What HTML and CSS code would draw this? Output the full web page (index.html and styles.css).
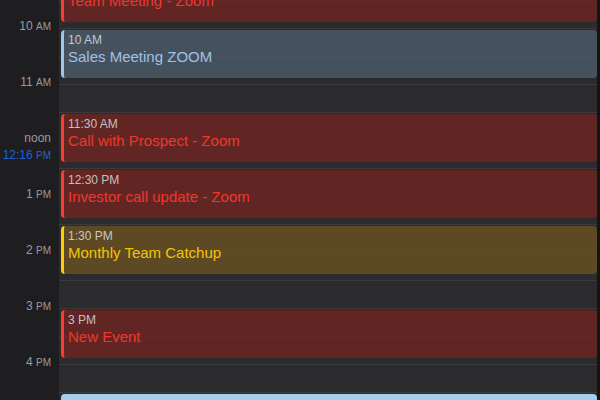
FILE: index.html
```html
<!DOCTYPE html>
<html>
<head>
<meta charset="utf-8">
<link rel="stylesheet" href="styles.css">
</head>
<body>
<div class="cal">
  <div class="times">
    <div class="hour">10 <span class="ap">AM</span></div>
    <div class="hour">11 <span class="ap">AM</span></div>
    <div class="hour">noon<div class="now">12:16 <span class="ap">PM</span></div></div>
    <div class="hour">1 <span class="ap">PM</span></div>
    <div class="hour">2 <span class="ap">PM</span></div>
    <div class="hour">3 <span class="ap">PM</span></div>
    <div class="hour">4 <span class="ap">PM</span></div>
  </div>
  <div class="day">
    <div class="event red" style="grid-row: 1 / span 2">
      <div class="time">9 AM</div>
      <div class="title">Team Meeting - Zoom</div>
    </div>
    <div class="event blue" style="grid-row: 3 / span 2">
      <div class="time">10 AM</div>
      <div class="title">Sales Meeting ZOOM</div>
    </div>
    <div class="event red" style="grid-row: 6 / span 2">
      <div class="time">11:30 AM</div>
      <div class="title">Call with Prospect - Zoom</div>
    </div>
    <div class="event red" style="grid-row: 8 / span 2">
      <div class="time">12:30 PM</div>
      <div class="title">Investor call update - Zoom</div>
    </div>
    <div class="event yellow" style="grid-row: 10 / span 2">
      <div class="time">1:30 PM</div>
      <div class="title">Monthly Team Catchup</div>
    </div>
    <div class="event red" style="grid-row: 13 / span 2">
      <div class="time">3 PM</div>
      <div class="title">New Event</div>
    </div>
    <div class="event selected" style="grid-row: 16 / span 2"></div>
  </div>
  <div class="edge"></div>
</div>
</body>
</html>
```
FILE: styles.css
```css
html, body {
  margin: 0;
  padding: 0;
  background: #1e1e20;
}
body {
  font-family: "Liberation Sans", Arial, sans-serif;
}
.cal {
  display: grid;
  grid-template-columns: 59px 1fr 3px;
  width: 600px;
  height: 400px;
  overflow: hidden;
}
.times {
  background: #1e1e20;
  padding-top: 19px;
}
.hour {
  height: 56px;
  line-height: 14px;
  text-align: right;
  padding-right: 8px;
  font-size: 12px;
  color: #9a9a9e;
}
.ap {
  font-size: 10px;
}
.now {
  color: #2160db;
  margin-top: 3px;
}
.day {
  display: grid;
  grid-template-rows: repeat(17, 28px);
  grid-template-columns: 1fr;
  margin-top: -28px;
  background: repeating-linear-gradient(to bottom, #3a3a3c 0, #3a3a3c 1px, transparent 1px, transparent 28px), #2b2b2d;
  align-items: start;
}
.edge {
  background: #141414;
}
.event {
  grid-column: 1;
  box-sizing: border-box;
  height: 48px;
  margin: 2px 0 0 2px;
  border-radius: 4px;
  border-left: 3px solid;
  padding: 3px 4px 0 4px;
  white-space: nowrap;
  overflow: hidden;
}
.time {
  font-size: 12px;
  line-height: 15px;
  color: rgba(238, 238, 242, 0.76);
}
.title {
  font-size: 15px;
  line-height: 18px;
}
.red {
  background: rgba(116, 38, 34, 0.75);
  border-left-color: #ff3b30;
}
.red .title { color: #f0362b; }
.blue {
  background: rgba(79, 95, 110, 0.75);
  border-left-color: #9ec5ea;
}
.blue .title { color: #9fc3e7; }
.yellow {
  background: rgba(111, 86, 33, 0.75);
  border-left-color: #ffcc00;
}
.yellow .title { color: #f5c400; }
.selected {
  background: #a6ccee;
  border-left-color: #a6ccee;
}
```
